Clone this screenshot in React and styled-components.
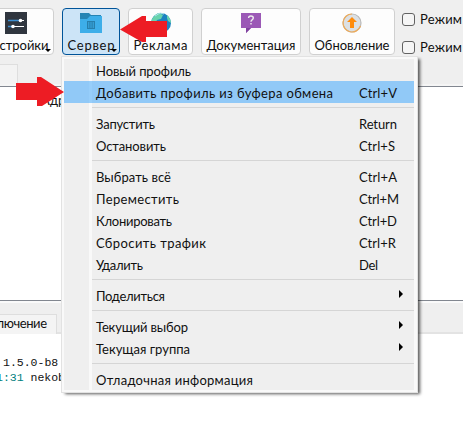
import React, { useLayoutEffect, useRef, useState } from "react";
import styled, { createGlobalStyle } from "styled-components";

const GlobalStyle = createGlobalStyle`
  * { box-sizing: border-box; }
  body { margin: 0; overflow: hidden; background: #fff; }
`;

const Window = styled.div`
  position: relative;
  display: flex;
  flex-direction: column;
  width: 463px;
  height: 435px;
  overflow: hidden;
  background: #efefef;
  color: #111;
  font: 13px/16px Lato, "Open Sans", sans-serif;
`;

const Text = styled.span`
  display: inline-block;
  justify-self: start;
  white-space: pre;
`;

/* Spaces the letters of a label so that it fills the given width. */
function Label({ children, width }) {
  const ref = useRef(null);
  const [spacing, setSpacing] = useState(0);
  useLayoutEffect(() => {
    const el = ref.current;
    el.style.letterSpacing = "0px";
    const natural = el.getBoundingClientRect().width;
    const next = (width - natural) / (children.length - 1);
    el.style.letterSpacing = `${next}px`;
    setSpacing(next);
  }, [children, width]);
  return (
    <Text ref={ref} style={{ letterSpacing: `${spacing}px`, marginRight: -spacing }}>
      {children}
    </Text>
  );
}

const Toolbar = styled.header`
  display: flex;
  gap: 8px;
  height: 64px;
  padding-top: 8px;
  flex: none;
`;

const ToolButton = styled.button`
  position: relative;
  display: flex;
  flex-direction: column;
  align-items: center;
  flex: none;
  width: ${(p) => p.$width}px;
  height: 47px;
  margin: 0;
  padding: 3px 0 0;
  border: 1px solid ${(p) => (p.$active ? "#005499" : "#d0d0d0")};
  border-radius: 4px;
  background: ${(p) => (p.$active ? "#cce4f7" : "#fdfdfd")};
  color: inherit;
  font: inherit;
  &:first-child { margin-left: -22px; }
  svg { display: block; flex: none; }
  ${Text} { margin-top: 3px; flex: none; }
`;

const DropMark = styled.i`
  position: absolute;
  right: 2px;
  bottom: 2px;
  border: 3px solid transparent;
  border-top-color: #000;
  border-bottom: 0;
`;

const Checks = styled.div`
  display: flex;
  flex-direction: column;
  gap: 12px;
  padding-top: 3px;
  margin-left: -1px;
`;

const Check = styled.label`
  display: flex;
  gap: 5px;
  height: 16px;
  align-items: center;
`;

const Box = styled.i`
  width: 13px;
  height: 13px;
  border: 1px solid #626262;
  border-radius: 3px;
  background: #f5f5f5;
`;

const TopTabs = styled.div`
  flex: none;
  height: 22px;
`;

const TopTab = styled.div`
  width: 18px;
  height: 20px;
  border: 1px solid #dedede;
  border-width: 1px 1px 0 0;
  background: #f3f3f3;
`;

const ProfileTable = styled.section`
  flex: none;
  height: 215px;
  border: 1px solid #828790;
  border-width: 1px 0;
  background: #fff;
  padding: 5px 0 0 41px;
  box-shadow: 0 -2px 0 #f5f5f5;
`;

const BottomTabs = styled.div`
  flex: none;
  height: 33px;
  padding-top: 11px;
  border-top: 2px solid #fafafa;
  border-bottom: 2px solid #e3e3e3;
`;

const BottomTab = styled.div`
  display: flex;
  justify-content: flex-end;
  width: 57px;
  height: 20px;
  padding: 0 9px 0 0;
  border: 1px solid #dedede;
  border-width: 1px 1px 0 0;
  background: #f4f4f4;
`;

const Log = styled.pre`
  flex: 1;
  margin: 0;
  padding: 21px 0 0 3px;
  background: #fff;
  font: 11.5px/15px "Liberation Mono", monospace;
`;

const LogLine = styled.div`
  margin-left: ${(p) => p.$shift}px;
`;

const Time = styled.span`
  color: #008080;
`;

const Menu = styled.nav`
  position: absolute;
  left: 61px;
  top: 56px;
  width: 357px;
  height: 337px;
  padding: 2px 3px 2px 2px;
  border: 1px solid #e2e2e2;
  background: linear-gradient(90deg, #efefef 25px, #f9f9f9 25px 28px, #efefef 28px) 2px 2px / 350px 331px no-repeat #f9f9f9;
  box-shadow: 3px 2px 3px -1px rgba(0, 0, 0, 0.65);
  clip-path: inset(0 -8px -8px 0);
`;

const MenuItem = styled.div`
  display: grid;
  grid-template-columns: 263px 1fr;
  align-items: center;
  position: relative;
  height: 22px;
  padding: 1px 11px 0 32px;
  background: ${(p) =>
    p.$selected
      ? "linear-gradient(90deg, #91c9f7 25px, #97cefa 25px 28px, #91c9f7 28px)"
      : "none"};
`;

const Separator = styled.hr`
  height: 1px;
  margin: 4px 0 4px 28px;
  border: 0;
  background: #d5d5d5;
`;

const SubmenuMark = styled.i`
  justify-self: end;
  width: 0;
  margin-top: -3px;
  border: 4px solid transparent;
  border-left: 4px solid #000;
  border-right: 0;
`;

const Pointer = styled.svg`
  position: absolute;
  left: ${(p) => p.$x}px;
  top: ${(p) => p.$y}px;
  fill: #ed1c24;
`;

const SettingsIcon = () => (
  <svg width="22" height="22" viewBox="0 0 22 22">
    <path d="M0 0h22v22H0z" fill="#30363f" />
    <path d="M3 8.5h16M3 14.5h16" stroke="#fff" strokeWidth="1.2" />
    <path d="M3 8.5h13M3 14.5h5" stroke="#3d8ed0" strokeWidth="1.3" />
    <circle cx="15.5" cy="8.5" r="1.8" fill="#fff" />
    <circle cx="8" cy="14.5" r="1.8" fill="#fff" />
  </svg>
);

const FolderIcon = () => (
  <svg width="22" height="22" viewBox="0 0 22 22">
    <path d="M0 1h9l2 2h10v7H0z" fill="#2584b4" />
    <path d="M0 7h7l3-3h12v17H0z" fill="#3daee9" />
    <path d="M7 9h8v8H7z" fill="#277fac" />
    <path d="M8.5 10v6M11 10v6M13.5 10v6M8 11h6M8 13h6M8 15h6" stroke="#3daee9" strokeWidth=".55" />
  </svg>
);

const GlobeIcon = () => (
  <svg width="22" height="22" viewBox="0 0 22 22">
    <circle cx="11" cy="11" r="10" fill="#1b82c0" />
    <path d="M2 7q3-5 7-6l4 2-2 4-4 1-2 4-3 1-1-2zM17 3q4 4 4 8l-3-2-1-3z" fill="#68d3ac" />
    <path d="M5 4l5-3 4 1" stroke="#aee5eb" fill="none" />
  </svg>
);

const HelpIcon = () => (
  <svg width="22" height="22" viewBox="0 0 22 22">
    <path d="M1 1h20v15H11l-5 5v-5H1z" fill="#9b59b6" />
    <path d="M6 16h5l-5 5z" fill="#8144a0" />
    <path d="M8.6 6q0-2 2.3-2 2.4 0 2.4 2 0 1-1.2 1.8T11 9.7M11 11v1.5" stroke="#eee" strokeWidth="1.4" fill="none" />
  </svg>
);

const UpdateIcon = () => (
  <svg width="22" height="22" viewBox="0 0 22 22">
    <circle cx="11" cy="11" r="9" fill="#dce0e3" stroke="#b9b9b9" strokeWidth="1.2" />
    <path d="M11 2a9 9 0 1 0 8.5 12" stroke="#efab58" strokeWidth="1.2" fill="none" />
    <path d="M11 5l5 5h-3v6H9v-6H6z" fill="#ff8c0b" />
  </svg>
);

const menu = [
  ["Новый профиль", 95],
  ["Добавить профиль из буфера обмена", 237, "Ctrl+V", 38],
  null,
  ["Запустить", 59, "Return", 38],
  ["Остановить", 70, "Ctrl+S", 36],
  null,
  ["Выбрать всё", 75, "Ctrl+A", 38],
  ["Переместить", 83, "Ctrl+M", 40],
  ["Клонировать", 76, "Ctrl+D", 38],
  ["Сбросить трафик", 110, "Ctrl+R", 37],
  ["Удалить", 47, "Del", 19],
  null,
  ["Поделиться", 69, "sub"],
  null,
  ["Текущий выбор", 92, "sub"],
  ["Текущая группа", 94, "sub"],
  null,
  ["Отладочная информация", 157],
];

export default function App() {
  return (
    <Window>
      <GlobalStyle />
      <Toolbar>
        <ToolButton $width={76}>
          <SettingsIcon />
          <Label width={65}>Настройки</Label>
          <DropMark />
        </ToolButton>
        <ToolButton $width={58} $active>
          <FolderIcon />
          <Label width={47}>Сервер</Label>
          <DropMark />
        </ToolButton>
        <ToolButton $width={65}>
          <GlobeIcon />
          <Label width={54}>Реклама</Label>
        </ToolButton>
        <ToolButton $width={100}>
          <HelpIcon />
          <Label width={89}>Документация</Label>
        </ToolButton>
        <ToolButton $width={86}>
          <UpdateIcon />
          <Label width={75}>Обновление</Label>
        </ToolButton>
        <Checks>
          <Check><Box /><Label width={42}>Режим</Label></Check>
          <Check><Box /><Label width={42}>Режим</Label></Check>
        </Checks>
      </Toolbar>
      <TopTabs><TopTab /></TopTabs>
      <ProfileTable>Адрес</ProfileTable>
      <BottomTabs>
        <BottomTab><Label width={80}>Подключение</Label></BottomTab>
      </BottomTabs>
      <Log>
        <LogLine $shift={0}>1.5.0-b8</LogLine>
        <LogLine $shift={-7}><Time>1:31</Time> nekobox</LogLine>
      </Log>
      <Menu>
        {menu.map((entry, i) => {
          if (!entry) return <Separator key={i} />;
          const [title, width, key, keyWidth] = entry;
          return (
            <MenuItem key={i} $selected={i === 1}>
              <Label width={width}>{title}</Label>
              {key === "sub" ? <SubmenuMark /> : key && <Label width={keyWidth}>{key}</Label>}
            </MenuItem>
          );
        })}
      </Menu>
      <Pointer $x={120} $y={16} width="47" height="27">
        <path d="M0 13.5L22 0h4v5h21v16H26v5h-4z" />
      </Pointer>
      <Pointer $x={16} $y={77} width="48" height="30">
        <path d="M0 6h21V0h4l23 15-22 14h-5v-6H0z" />
      </Pointer>
    </Window>
  );
}
